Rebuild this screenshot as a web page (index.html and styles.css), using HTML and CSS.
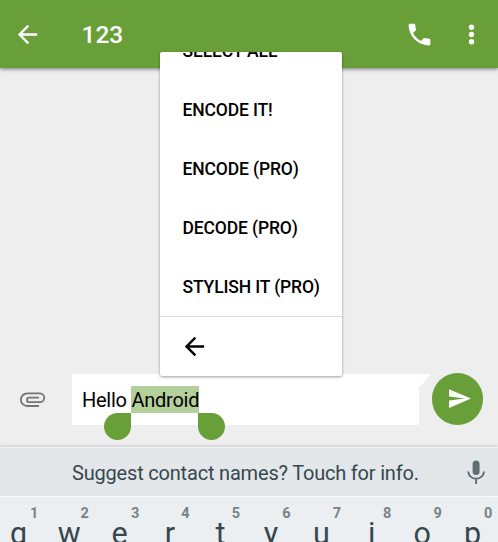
FILE: index.html
```html
<!DOCTYPE html>
<html lang="en">
<head>
<meta charset="utf-8">
<title>Messaging</title>
<link rel="stylesheet" href="styles.css">
</head>
<body>
<div class="screen">
  <header class="appbar">
    <svg class="icon back" viewBox="0 0 24 24"><path d="M20 11H7.83l5.59-5.59L12 4l-8 8 8 8 1.41-1.41L7.83 13H20v-2z"/></svg>
    <h1 class="title">123</h1>
    <svg class="icon phone" viewBox="0 0 24 24"><path d="M6.62 10.79c1.44 2.83 3.76 5.14 6.59 6.59l2.2-2.2c.27-.27.67-.36 1.02-.24 1.12.37 2.33.57 3.57.57.55 0 1 .45 1 1V20c0 .55-.45 1-1 1-9.39 0-17-7.61-17-17 0-.55.45-1 1-1h3.5c.55 0 1 .45 1 1 0 1.25.2 2.45.57 3.57.11.35.03.74-.25 1.02l-2.2 2.2z"/></svg>
    <svg class="icon more" viewBox="0 0 24 24"><circle cx="12" cy="6" r="2.2"/><circle cx="12" cy="12" r="2.2"/><circle cx="12" cy="18" r="2.2"/></svg>
  </header>
  <main class="thread"></main>
  <section class="compose">
    <svg class="clip" viewBox="0 0 26 16"><path d="M19 14H7.2a6.3 6.3 0 0 1 0-12.6H19.8a4.4 4.4 0 0 1 0 8.8H9.3a2.3 2.3 0 0 1 0-4.6H19"/></svg>
    <div class="bubble">
      <span class="message">Hello <span class="selected">Android<i class="handle start"></i><i class="handle end"></i></span></span>
      <svg class="tail" viewBox="0 0 12 14"><path d="M0 0h12L0 14z"/></svg>
    </div>
    <div class="send"><svg viewBox="0 0 24 24"><path d="M2.01 21L23 12 2.01 3 2 10l15 2-15 2z"/></svg></div>
  </section>
  <section class="suggest">
    <span class="hint">Suggest contact names? Touch for info.</span>
    <svg class="mic" viewBox="0 0 18 24"><rect x="5.6" y="0.5" width="7" height="14.5" rx="3.5"/><path d="M1.3 11.5a7.8 7.3 0 0 0 15.6 0M9.1 18.7V24"/></svg>
  </section>
  <section class="keys">
    <div class="key"><sup>1</sup><b>q</b></div>
    <div class="key"><sup>2</sup><b>w</b></div>
    <div class="key"><sup>3</sup><b>e</b></div>
    <div class="key"><sup>4</sup><b>r</b></div>
    <div class="key"><sup>5</sup><b>t</b></div>
    <div class="key"><sup>6</sup><b>y</b></div>
    <div class="key"><sup>7</sup><b>u</b></div>
    <div class="key"><sup>8</sup><b>i</b></div>
    <div class="key"><sup>9</sup><b>o</b></div>
    <div class="key"><sup>0</sup><b>p</b></div>
  </section>
  <div class="menu">
    <div class="items">
      <div class="item">SELECT ALL</div>
      <div class="item">ENCODE IT!</div>
      <div class="item">ENCODE (PRO)</div>
      <div class="item">DECODE (PRO)</div>
      <div class="item">STYLISH IT (PRO)</div>
    </div>
    <div class="menu-back">
      <svg viewBox="0 0 24 24"><path d="M20 11H7.83l5.59-5.59L12 4l-8 8 8 8 1.41-1.41L7.83 13H20v-2z"/></svg>
    </div>
  </div>
</div>
</body>
</html>
```
FILE: styles.css
```css
* { box-sizing: border-box; }
body { margin: 0; font-family: Roboto, "Liberation Sans", sans-serif; }
svg { display: block; flex: none; }
.screen {
  position: relative;
  display: flex;
  flex-direction: column;
  width: 498px;
  height: 542px;
  overflow: hidden;
  background: #eee;
}
.appbar {
  display: flex;
  align-items: center;
  height: 68px;
  flex: none;
  padding: 0 12px 0 13px;
  background: #689f38;
  box-shadow: 0 1px 4px rgba(0, 0, 0, .5);
}
.icon { width: 29px; height: 29px; fill: #fff; }
.title {
  flex: 1;
  margin: 2px 0 0 39.5px;
  color: #fff;
  font-size: 24.5px;
  font-weight: 500;
  line-height: 30px;
}
.phone { margin-right: 23px; }
.thread { flex: 1; }
.compose {
  display: flex;
  align-items: flex-start;
  height: 74px;
  flex: none;
}
.clip {
  width: 26px;
  height: 16px;
  margin: 18.5px 26.5px 0 19.5px;
  fill: none;
  stroke: #757575;
  stroke-width: 1.8;
}
.bubble {
  position: relative;
  width: 347px;
  height: 51px;
  margin-top: 1px;
  padding: 12px 10px;
  background: #fff;
  border-radius: 2px 0 2px 2px;
}
.message {
  display: block;
  font-size: 20px;
  letter-spacing: -.25px;
  line-height: 28px;
  color: #000;
  white-space: pre;
}
.selected {
  position: relative;
  display: inline-block;
  height: 27px;
  padding-top: 1px;
  line-height: 26px;
  vertical-align: top;
  background: #b3cf9b;
}
.handle {
  position: absolute;
  top: 27px;
  width: 27px;
  height: 27px;
  background: #689f38;
}
.start { right: 100%; border-radius: 50% 0 50% 50%; }
.end { left: calc(100% - 1px); border-radius: 0 50% 50% 50%; }
.tail {
  position: absolute;
  left: 100%;
  top: 0;
  width: 12px;
  height: 14px;
  fill: #fff;
}
.send {
  display: flex;
  align-items: center;
  justify-content: center;
  width: 51.5px;
  height: 51.5px;
  margin-left: 12.5px;
  border-radius: 50%;
  background: #689f38;
}
.send svg { width: 25px; height: 25px; margin-left: 4px; fill: #fff; }
.suggest {
  display: flex;
  align-items: center;
  height: 49px;
  flex: none;
  padding: 2px 13.5px 0 72px;
  background: #e3e7e9;
  border-top: 1px solid #f0f2f3;
  box-shadow: 0 -1px 3px rgba(0, 0, 0, .15);
}
.hint {
  flex: 1;
  color: #37474f;
  font-size: 20px;
  letter-spacing: -.19px;
  line-height: 26px;
  white-space: nowrap;
}
.mic { width: 18px; height: 24px; margin-bottom: 3px; fill: #606d73; stroke: none; }
.mic path { fill: none; stroke: #606d73; stroke-width: 1.9; }
.keys {
  display: grid;
  grid-template-columns: repeat(10, 50.45px);
  height: 46px;
  flex: none;
  margin-left: -7px;
  background: #eceff1;
  border-top: 1px solid #f8fafa;
  overflow: hidden;
}
.key {
  display: flex;
  flex-direction: column;
  align-items: center;
  height: 60px;
  padding-top: 9px;
  color: #37474f;
}
.key sup {
  margin-left: 32px;
  color: #788388;
  font-size: 14.5px;
  font-weight: 700;
  line-height: 16px;
}
.key b { font-size: 30.5px; font-weight: 400; line-height: 30px; margin: -3px 0 0 1px; }
.menu {
  position: absolute;
  left: 160px;
  top: 52px;
  width: 182px;
  height: 324px;
  display: flex;
  flex-direction: column;
  background: #fff;
  border-radius: 2px;
  box-shadow: 0 1px 3px rgba(0, 0, 0, .4);
  overflow: hidden;
}
.items {
  display: flex;
  flex-direction: column;
  justify-content: flex-end;
  height: 264px;
  overflow: hidden;
}
.item {
  flex: none;
  height: 59px;
  padding-left: 22.5px;
  color: #000;
  font-size: 17.5px;
  font-weight: 500;
  letter-spacing: -.14px;
  line-height: 60px;
  white-space: nowrap;
}
.menu-back {
  display: flex;
  align-items: center;
  height: 60px;
  padding-left: 20px;
  border-top: 1px solid #dcdcdc;
}
.menu-back svg { width: 29px; height: 29px; }
```
